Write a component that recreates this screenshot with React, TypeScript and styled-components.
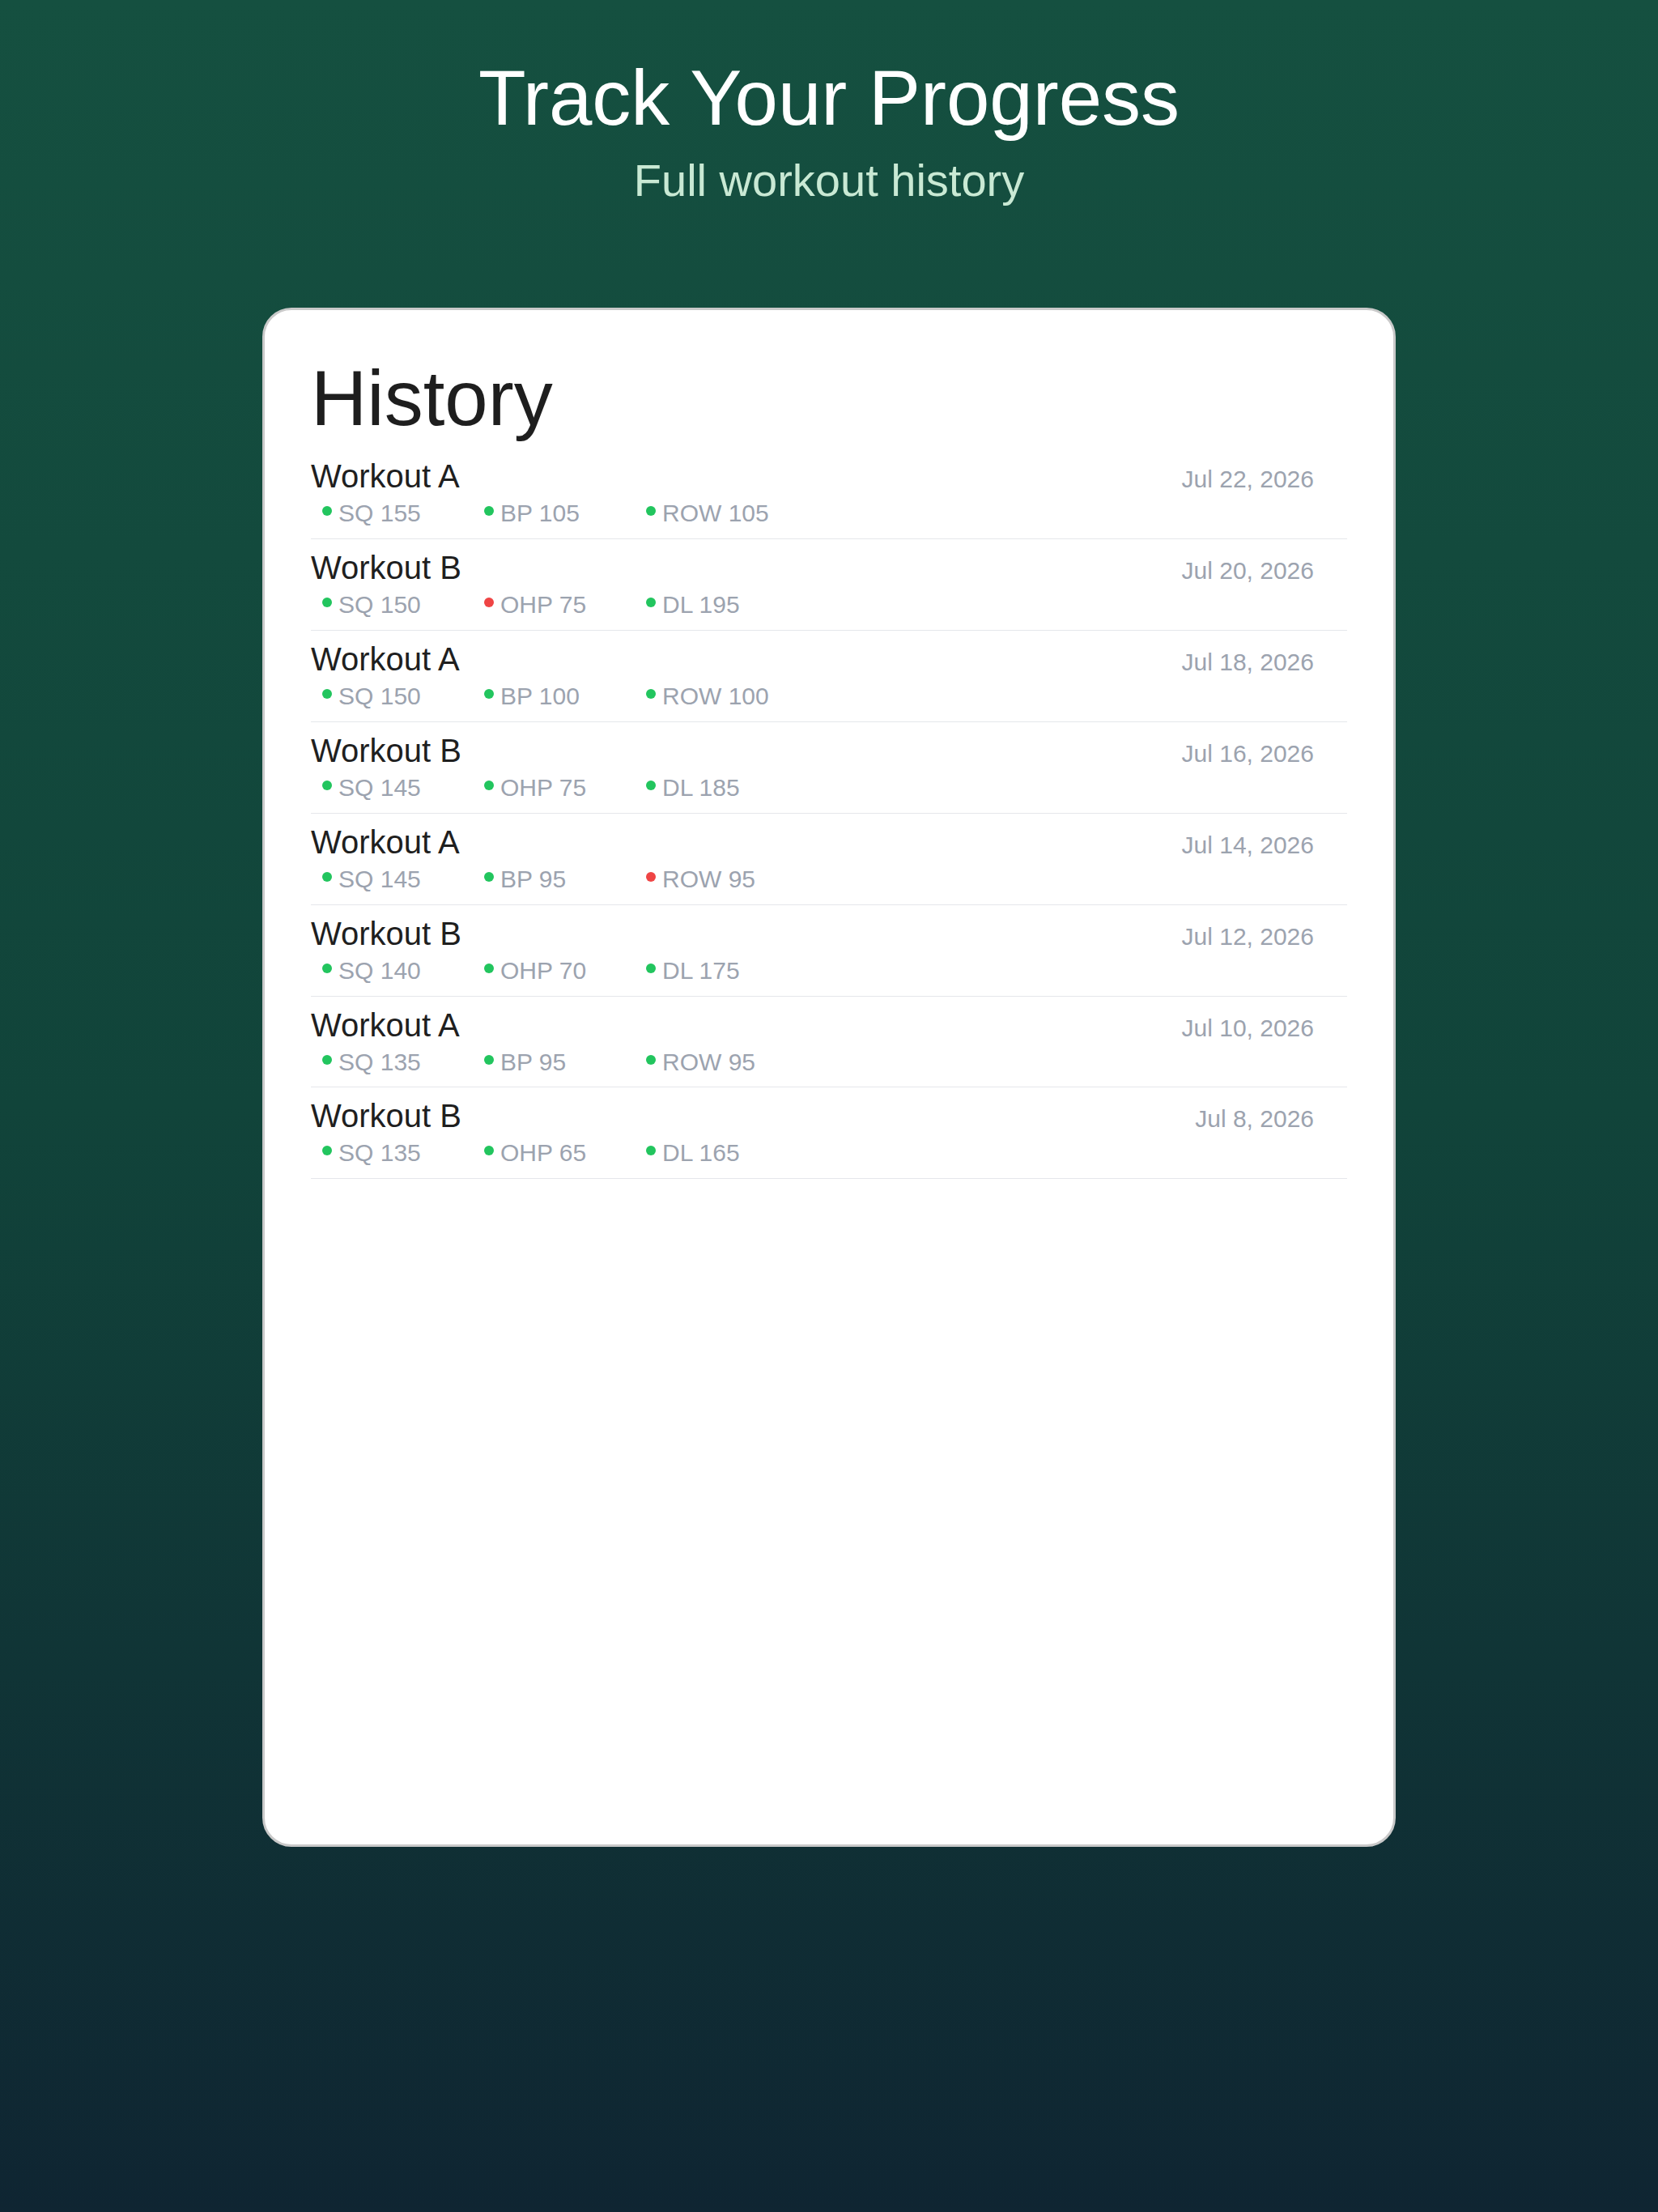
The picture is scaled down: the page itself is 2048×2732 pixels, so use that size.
import React from 'react';
import styled, { createGlobalStyle } from 'styled-components';

const GlobalStyle = createGlobalStyle`
  html, body {
    margin: 0;
    padding: 0;
  }
  body {
    font-family: 'Liberation Sans', Arial, sans-serif;
    background: #0f2532;
  }
  * {
    box-sizing: border-box;
  }
`;

const Page = styled.div`
  min-height: 2732px;
  padding-top: 66px;
  display: flex;
  flex-direction: column;
  align-items: center;
  background: linear-gradient(180deg, #155040 0%, #11443a 50%, #0f2532 100%);
`;

const Title = styled.h1`
  margin: 0;
  font-size: 96px;
  line-height: 1.15;
  font-weight: 400;
  color: #ffffff;
`;

const Subtitle = styled.p`
  margin: 15px 0 0;
  font-size: 56px;
  line-height: 1.15;
  color: #c9e9d4;
`;

const Card = styled.section`
  margin-top: 124px;
  width: 1400px;
  height: 1901px;
  padding: 54px 57px;
  background: #ffffff;
  border: 3px solid #c9c9c9;
  border-radius: 36px;
  display: flex;
  flex-direction: column;
`;

const Heading = styled.h2`
  margin: 0 0 6px;
  font-size: 96px;
  line-height: 1.15;
  font-weight: 400;
  color: #1e1e1e;
`;

const List = styled.ul`
  margin: 0;
  padding: 0;
  list-style: none;
`;

const Row = styled.li`
  padding: 12px 0 13.4px;
  border-bottom: 1px solid #e5e7eb;
`;

const RowTop = styled.div`
  display: flex;
  justify-content: space-between;
  align-items: flex-start;
  padding-right: 41px;
`;

const WorkoutName = styled.span`
  font-size: 40px;
  line-height: 46px;
  color: #1f1f1f;
`;

const DateText = styled.span`
  margin-top: 10px;
  font-size: 30px;
  line-height: 34.5px;
  color: #9ca3af;
`;

const Stats = styled.div`
  display: flex;
  margin-top: 6px;
  padding-left: 14px;
`;

const Stat = styled.div`
  width: 200px;
  display: flex;
  align-items: flex-start;
  gap: 8px;
  font-size: 30px;
  line-height: 34.5px;
  color: #9ca3af;
`;

const Dot = styled.span<{ $ok: boolean }>`
  flex: 0 0 auto;
  width: 12px;
  height: 12px;
  margin-top: 8px;
  border-radius: 50%;
  background: ${(p) => (p.$ok ? '#22c55e' : '#ef4444')};
`;

type Lift = { name: string; weight: number; ok: boolean };
type Workout = { name: string; date: string; lifts: Lift[] };

const history: Workout[] = [
  {
    name: 'Workout A',
    date: 'Jul 22, 2026',
    lifts: [
      { name: 'SQ', weight: 155, ok: true },
      { name: 'BP', weight: 105, ok: true },
      { name: 'ROW', weight: 105, ok: true },
    ],
  },
  {
    name: 'Workout B',
    date: 'Jul 20, 2026',
    lifts: [
      { name: 'SQ', weight: 150, ok: true },
      { name: 'OHP', weight: 75, ok: false },
      { name: 'DL', weight: 195, ok: true },
    ],
  },
  {
    name: 'Workout A',
    date: 'Jul 18, 2026',
    lifts: [
      { name: 'SQ', weight: 150, ok: true },
      { name: 'BP', weight: 100, ok: true },
      { name: 'ROW', weight: 100, ok: true },
    ],
  },
  {
    name: 'Workout B',
    date: 'Jul 16, 2026',
    lifts: [
      { name: 'SQ', weight: 145, ok: true },
      { name: 'OHP', weight: 75, ok: true },
      { name: 'DL', weight: 185, ok: true },
    ],
  },
  {
    name: 'Workout A',
    date: 'Jul 14, 2026',
    lifts: [
      { name: 'SQ', weight: 145, ok: true },
      { name: 'BP', weight: 95, ok: true },
      { name: 'ROW', weight: 95, ok: false },
    ],
  },
  {
    name: 'Workout B',
    date: 'Jul 12, 2026',
    lifts: [
      { name: 'SQ', weight: 140, ok: true },
      { name: 'OHP', weight: 70, ok: true },
      { name: 'DL', weight: 175, ok: true },
    ],
  },
  {
    name: 'Workout A',
    date: 'Jul 10, 2026',
    lifts: [
      { name: 'SQ', weight: 135, ok: true },
      { name: 'BP', weight: 95, ok: true },
      { name: 'ROW', weight: 95, ok: true },
    ],
  },
  {
    name: 'Workout B',
    date: 'Jul 8, 2026',
    lifts: [
      { name: 'SQ', weight: 135, ok: true },
      { name: 'OHP', weight: 65, ok: true },
      { name: 'DL', weight: 165, ok: true },
    ],
  },
];

const App: React.FunctionComponent = () => {
  return (
    <>
      <GlobalStyle />
      <Page>
        <Title>Track Your Progress</Title>
        <Subtitle>Full workout history</Subtitle>
        <Card>
          <Heading>History</Heading>
          <List>
            {history.map((w, i) => (
              <Row key={i}>
                <RowTop>
                  <WorkoutName>{w.name}</WorkoutName>
                  <DateText>{w.date}</DateText>
                </RowTop>
                <Stats>
                  {w.lifts.map((l) => (
                    <Stat key={l.name}>
                      <Dot $ok={l.ok} />
                      <span>
                        {l.name} {l.weight}
                      </span>
                    </Stat>
                  ))}
                </Stats>
              </Row>
            ))}
          </List>
        </Card>
      </Page>
    </>
  );
};

export default App;
